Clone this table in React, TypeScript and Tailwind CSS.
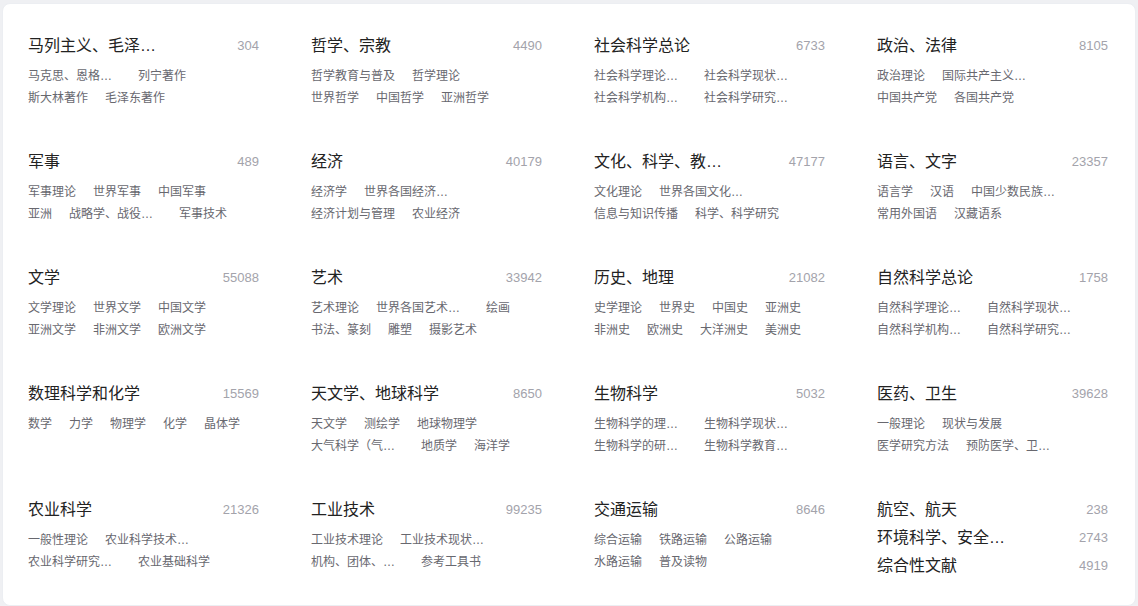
import { FC } from "react";

type Category = {
  name: string;
  count: number;
  rows: string[][];
};

const categories: Category[] = [
  { name: "马列主义、毛泽东思想", count: 304, rows: [["马克思、恩格斯著作", "列宁著作"], ["斯大林著作", "毛泽东著作"]] },
  { name: "哲学、宗教", count: 4490, rows: [["哲学教育与普及", "哲学理论"], ["世界哲学", "中国哲学", "亚洲哲学"]] },
  { name: "社会科学总论", count: 6733, rows: [["社会科学理论与方法论", "社会科学现状及发展"], ["社会科学机构、团体、会议", "社会科学研究方法"]] },
  { name: "政治、法律", count: 8105, rows: [["政治理论", "国际共产主义运动"], ["中国共产党", "各国共产党"]] },
  { name: "军事", count: 489, rows: [["军事理论", "世界军事", "中国军事"], ["亚洲", "战略学、战役学、战术学", "军事技术"]] },
  { name: "经济", count: 40179, rows: [["经济学", "世界各国经济概况"], ["经济计划与管理", "农业经济"]] },
  { name: "文化、科学、教育、体育", count: 47177, rows: [["文化理论", "世界各国文化与文化事业"], ["信息与知识传播", "科学、科学研究"]] },
  { name: "语言、文字", count: 23357, rows: [["语言学", "汉语", "中国少数民族语言"], ["常用外国语", "汉藏语系"]] },
  { name: "文学", count: 55088, rows: [["文学理论", "世界文学", "中国文学"], ["亚洲文学", "非洲文学", "欧洲文学"]] },
  { name: "艺术", count: 33942, rows: [["艺术理论", "世界各国艺术概况", "绘画"], ["书法、篆刻", "雕塑", "摄影艺术"]] },
  { name: "历史、地理", count: 21082, rows: [["史学理论", "世界史", "中国史", "亚洲史"], ["非洲史", "欧洲史", "大洋洲史", "美洲史"]] },
  { name: "自然科学总论", count: 1758, rows: [["自然科学理论与方法论", "自然科学现状及发展"], ["自然科学机构、团体、会议", "自然科学研究方法"]] },
  { name: "数理科学和化学", count: 15569, rows: [["数学", "力学", "物理学", "化学", "晶体学"]] },
  { name: "天文学、地球科学", count: 8650, rows: [["天文学", "测绘学", "地球物理学"], ["大气科学（气象学）", "地质学", "海洋学"]] },
  { name: "生物科学", count: 5032, rows: [["生物科学的理论与方法", "生物科学现状与发展"], ["生物科学的研究方法与技术", "生物科学教育与普及"]] },
  { name: "医药、卫生", count: 39628, rows: [["一般理论", "现状与发展"], ["医学研究方法", "预防医学、卫生学"]] },
  { name: "农业科学", count: 21326, rows: [["一般性理论", "农业科学技术现状与发展"], ["农业科学研究、试验", "农业基础科学"]] },
  { name: "工业技术", count: 99235, rows: [["工业技术理论", "工业技术现状与发展"], ["机构、团体、会议", "参考工具书"]] },
  { name: "交通运输", count: 8646, rows: [["综合运输", "铁路运输", "公路运输"], ["水路运输", "普及读物"]] },
];

const extras = [
  { name: "航空、航天", count: 238 },
  { name: "环境科学、安全科学", count: 2743 },
  { name: "综合性文献", count: 4919 },
];

const fontStack = { fontFamily: '"Liberation Sans", "Noto Sans CJK SC", sans-serif' };

const TitleRow: FC<{ name: string; count: number }> = ({ name, count }) => (
  <div className="flex h-6 items-center justify-between">
    <span className="max-w-[136px] truncate text-base leading-6 text-[#222]">{name}</span>
    <span className="text-[13px] text-[#a3a3ab]">{count}</span>
  </div>
);

const CategoryCell: FC<{ item: Category }> = ({ item }) => (
  <div>
    <TitleRow name={item.name} count={item.count} />
    <div className="mt-[7px]">
      {item.rows.map((row, i) => (
        <div key={i} className="flex h-[22px] items-center gap-[17px]">
          {row.map((sub) => (
            <span key={sub} className="max-w-[93px] truncate text-xs leading-[22px] text-[#68686f]">
              {sub}
            </span>
          ))}
        </div>
      ))}
    </div>
  </div>
);

const App: FC = () => {
  return (
    <div className="min-h-screen bg-[#eff0f3] pl-[2px] pt-[3px]" style={fontStack}>
      <div className="w-[1134px] rounded-lg border border-[#eceef2] bg-white pb-[27px] pl-[25px] pr-[27px] pt-[30px]">
        <div className="grid grid-cols-4 gap-x-[52px] gap-y-[41px]">
          {categories.map((c) => (
            <CategoryCell key={c.name} item={c} />
          ))}
          {/* last cell: top-level only */}
          <div className="flex flex-col gap-1">
            {extras.map((e) => (
              <TitleRow key={e.name} name={e.name} count={e.count} />
            ))}
          </div>
        </div>
      </div>
    </div>
  );
};

export default App;
